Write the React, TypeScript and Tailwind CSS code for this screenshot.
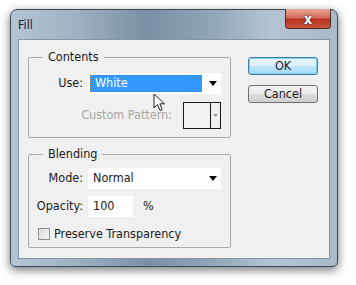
import React from "react";

const font = {
  fontFamily: '"DejaVu Sans Condensed", "DejaVu Sans", "Liberation Sans", sans-serif',
};

function DropArrow({ color = "#000" }: { color?: string }) {
  return (
    <svg width="8" height="5" viewBox="0 0 8 5" className="shrink-0">
      <path d="M0 0 H8 L4 5 Z" fill={color} />
    </svg>
  );
}

function GroupBox({
  title,
  className,
  children,
}: {
  title: string;
  className?: string;
  children: React.ReactNode;
}) {
  return (
    <fieldset
      className={`border border-[#a9a9a9] rounded-[2px] px-0 pb-0 pt-0 m-0 ${className ?? ""}`}
    >
      <legend className="ml-[14px] px-[5px] text-[12.5px] leading-[14px] text-[#1a1a1a]">
        {title}
      </legend>
      {children}
    </fieldset>
  );
}

function Cursor() {
  return (
    <svg
      width="14"
      height="20"
      viewBox="0 0 14 20"
      className="absolute left-[153px] top-[93px]"
    >
      <path
        d="M1 1 L1 15 L4.5 11.5 L7 17.5 L9.2 16.6 L6.8 10.8 L11.5 10.8 Z"
        fill="#fff"
        stroke="#222"
        strokeWidth="1"
        strokeLinejoin="round"
      />
    </svg>
  );
}

export default function App() {
  return (
    <div
      className="relative w-[356px] h-[285px] bg-white overflow-hidden"
      style={font}
    >
      {/* window */}
      <div className="absolute left-[10px] top-[9px] w-[328px] h-[258px] rounded-t-[7px] rounded-b-[5px] border border-[#3d4b5b] bg-[linear-gradient(90deg,#b5c5d4_0%,#9fb1c3_20%,#7a8fa5_42%,#92a6b9_62%,#b5c4d2_80%,#a9b9c8_100%)] shadow-[0_3px_10px_rgba(0,0,0,0.55)] flex flex-col">
        {/* title bar */}
        <div className="relative h-[29px] shrink-0 flex items-center pl-[7px]">
          <span className="text-[12.5px] text-[#221a3a] mt-[2px]">Fill</span>
          <div className="absolute right-[6px] top-[-1px] w-[46px] h-[20px] rounded-b-[4px] border border-[#5a2b25] border-t-0 bg-[linear-gradient(180deg,#e9a79b_0%,#d46b5a_45%,#b8321f_55%,#c6563f_100%)] flex items-center justify-center">
            <span className="text-white text-[14px] font-bold leading-none [text-shadow:0_0_1px_#333,0_0_2px_#333]">
              x
            </span>
          </div>
        </div>

        {/* client area */}
        <div className="relative mx-[7px] mb-[7px] flex-1 bg-[#f0f0f0] border border-[#8595a7] flex">
          <div className="flex flex-col pl-[9px] pt-[10px] gap-[9px]">
            <GroupBox title="Contents" className="w-[203px] h-[88px]">
              <div className="flex items-center mt-[9px]">
                <span className="w-[54px] text-right text-[12.5px] text-[#1a1a1a]">
                  Use:
                </span>
                <div className="ml-[5px] w-[133px] h-[21px] bg-white flex items-center pl-[2px] pr-[4px]">
                  <div className="w-[112px] h-[17px] bg-[#3399ff] border border-dotted border-[#b86a2a] flex items-center pl-[4px]">
                    <span className="text-white text-[12.5px] leading-none">
                      White
                    </span>
                  </div>
                  <div className="flex-1 flex justify-end">
                    <DropArrow />
                  </div>
                </div>
              </div>
              <div className="flex items-center mt-[8px]">
                <span className="w-[143px] text-right text-[12.5px] text-[#a5a5a5]">
                  Custom Pattern:
                </span>
                <div className="ml-[11px] w-[38px] h-[27px] border border-[#1a1a1a] flex">
                  <div className="w-[27px] h-full border-r border-[#1a1a1a] bg-[#f2f2f2]" />
                  <div className="flex-1 flex items-center justify-center">
                    <svg width="5" height="3" viewBox="0 0 5 3">
                      <path d="M0 0 H5 L2.5 3 Z" fill="#999" />
                    </svg>
                  </div>
                </div>
              </div>
            </GroupBox>

            <GroupBox title="Blending" className="w-[203px] h-[101px]">
              <div className="flex items-center mt-[7px]">
                <span className="w-[54px] text-right text-[12.5px] text-[#1a1a1a]">
                  Mode:
                </span>
                <div className="ml-[5px] w-[133px] h-[21px] bg-white flex items-center pl-[5px] pr-[4px]">
                  <span className="flex-1 text-[12.5px] text-[#1a1a1a]">
                    Normal
                  </span>
                  <DropArrow />
                </div>
              </div>
              <div className="flex items-center mt-[7px]">
                <span className="w-[54px] text-right text-[12.5px] text-[#1a1a1a]">
                  Opacity:
                </span>
                <div className="ml-[5px] w-[45px] h-[21px] bg-white flex items-center pl-[5px]">
                  <span className="text-[12.5px] text-[#1a1a1a]">100</span>
                </div>
                <span className="ml-[10px] text-[12.5px] text-[#1a1a1a]">%</span>
              </div>
              <div className="flex items-center mt-[8px] ml-[9px]">
                <div className="w-[12px] h-[12px] border border-[#8f8f8f] bg-[linear-gradient(135deg,#dcdcdc,#f8f8f8)]" />
                <span className="ml-[4px] text-[12.5px] text-[#1a1a1a]">
                  Preserve Transparency
                </span>
              </div>
            </GroupBox>
          </div>

          <div className="flex flex-col pl-[17px] pt-[17px] gap-[10px]">
            <button className="w-[70px] h-[18px] rounded-[3px] border border-[#3c7fb1] bg-[linear-gradient(180deg,#eaf6fd_0%,#d9f0fc_50%,#bee6fd_51%,#a7d9f5_100%)] shadow-[0_0_0_1px_#7fd0f6_inset] text-[12.5px] leading-none text-[#1a1a1a]">
              OK
            </button>
            <button className="w-[70px] h-[18px] rounded-[3px] border border-[#707070] bg-[linear-gradient(180deg,#f2f2f2_0%,#ebebeb_50%,#dddddd_51%,#cfcfcf_100%)] text-[12.5px] leading-none text-[#1a1a1a]">
              Cancel
            </button>
          </div>
        </div>
      </div>

      <Cursor />
    </div>
  );
}
